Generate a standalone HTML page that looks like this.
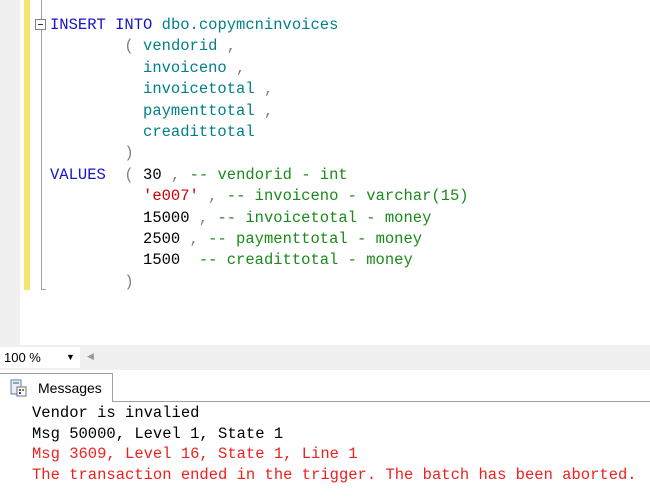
<!DOCTYPE html>
<html><head><style>
body{margin:0;width:650px;height:498px;overflow:hidden;background:#fff;position:relative;font-family:"Liberation Mono",monospace;}
.m{position:absolute;left:0;top:0;width:20px;height:345px;background:#f0f0f0;}
.y{position:absolute;left:24px;top:0;width:6px;height:290px;background:#f5e66b;}
.g{position:absolute;left:41px;top:0;width:1px;height:290px;background:#a0a0a0;}
.gh{position:absolute;left:41px;top:289px;width:5px;height:1px;background:#a0a0a0;}
.box{position:absolute;left:35px;top:19px;width:9px;height:9px;border:1px solid #808080;background:#fff;}
.box:after{content:"";position:absolute;left:2px;top:4px;width:5px;height:1px;background:#333;}
.code{position:absolute;left:50px;top:15px;font-size:15.5px;line-height:21.4px;white-space:pre;color:#000;}
.k{color:#1414c8}.t{color:#00808a}.p{color:#808080}.c{color:#1a8a1a}.s{color:#c80000}
.zb{position:absolute;left:0;top:345px;width:650px;height:25px;background:#f0f0f0;}
.zd{position:absolute;left:0;top:347px;width:80px;height:21px;background:#fff;font-family:"Liberation Sans",sans-serif;font-size:13px;line-height:21px;padding-left:4px;box-sizing:border-box;}
.tabs{position:absolute;left:0;top:370px;width:650px;height:31px;background:#fff;border-bottom:1px solid #a0a0a0;}
.tab{position:absolute;left:0;top:373px;width:112px;height:28px;background:#fff;border:1px solid #a0a0a0;border-bottom:none;border-left:none;font-family:"Liberation Sans",sans-serif;font-size:14px;line-height:28px;}
.msg{position:absolute;left:32px;top:403px;font-size:15.5px;line-height:20.5px;white-space:pre;}
</style></head><body>
<div class="m"></div><div class="y"></div><div class="g"></div><div class="gh"></div><div class="box"></div>
<div class="code"><span class="k">INSERT INTO</span> <span class="t">dbo.copymcninvoices</span>
        <span class="p">(</span> <span class="t">vendorid</span> <span class="p">,</span>
          <span class="t">invoiceno</span> <span class="p">,</span>
          <span class="t">invoicetotal</span> <span class="p">,</span>
          <span class="t">paymenttotal</span> <span class="p">,</span>
          <span class="t">creadittotal</span>
        <span class="p">)</span>
<span class="k">VALUES</span>  <span class="p">(</span> 30 <span class="p">,</span> <span class="c">-- vendorid - int</span>
          <span class="s">'e007'</span> <span class="p">,</span> <span class="c">-- invoiceno - varchar(15)</span>
          15000 <span class="p">,</span> <span class="c">-- invoicetotal - money</span>
          2500 <span class="p">,</span> <span class="c">-- paymenttotal - money</span>
          1500  <span class="c">-- creadittotal - money</span>
        <span class="p">)</span></div>
<div class="zb"></div>
<div class="zd">100 %<span style="position:absolute;left:66px;font-size:9px;">&#9660;</span></div>
<div style="position:absolute;left:87px;top:351px;font-size:9px;color:#999;font-family:'Liberation Sans',sans-serif;">&#9664;</div>
<div class="tabs"></div>
<div class="tab">
<svg style="position:absolute;left:10px;top:5px" width="18" height="18" viewBox="0 0 18 18"><rect x="1" y="1" width="10" height="14" fill="#e8eef5" stroke="#6080a0"/><rect x="3" y="3" width="6" height="2" fill="#8aa"/><rect x="7" y="8" width="9" height="9" fill="#fff" stroke="#607080"/><rect x="9" y="10" width="2" height="2" fill="#c33"/><rect x="12" y="10" width="2" height="2" fill="#3a3"/><rect x="9" y="13" width="2" height="2" fill="#33c"/></svg>
<span style="position:absolute;left:38px;">Messages</span></div>
<div class="msg">Vendor is invalied
Msg 50000, Level 1, State 1
<span style="color:#f02020">Msg 3609, Level 16, State 1, Line 1
The transaction ended in the trigger. The batch has been aborted.</span></div>
</body></html>
